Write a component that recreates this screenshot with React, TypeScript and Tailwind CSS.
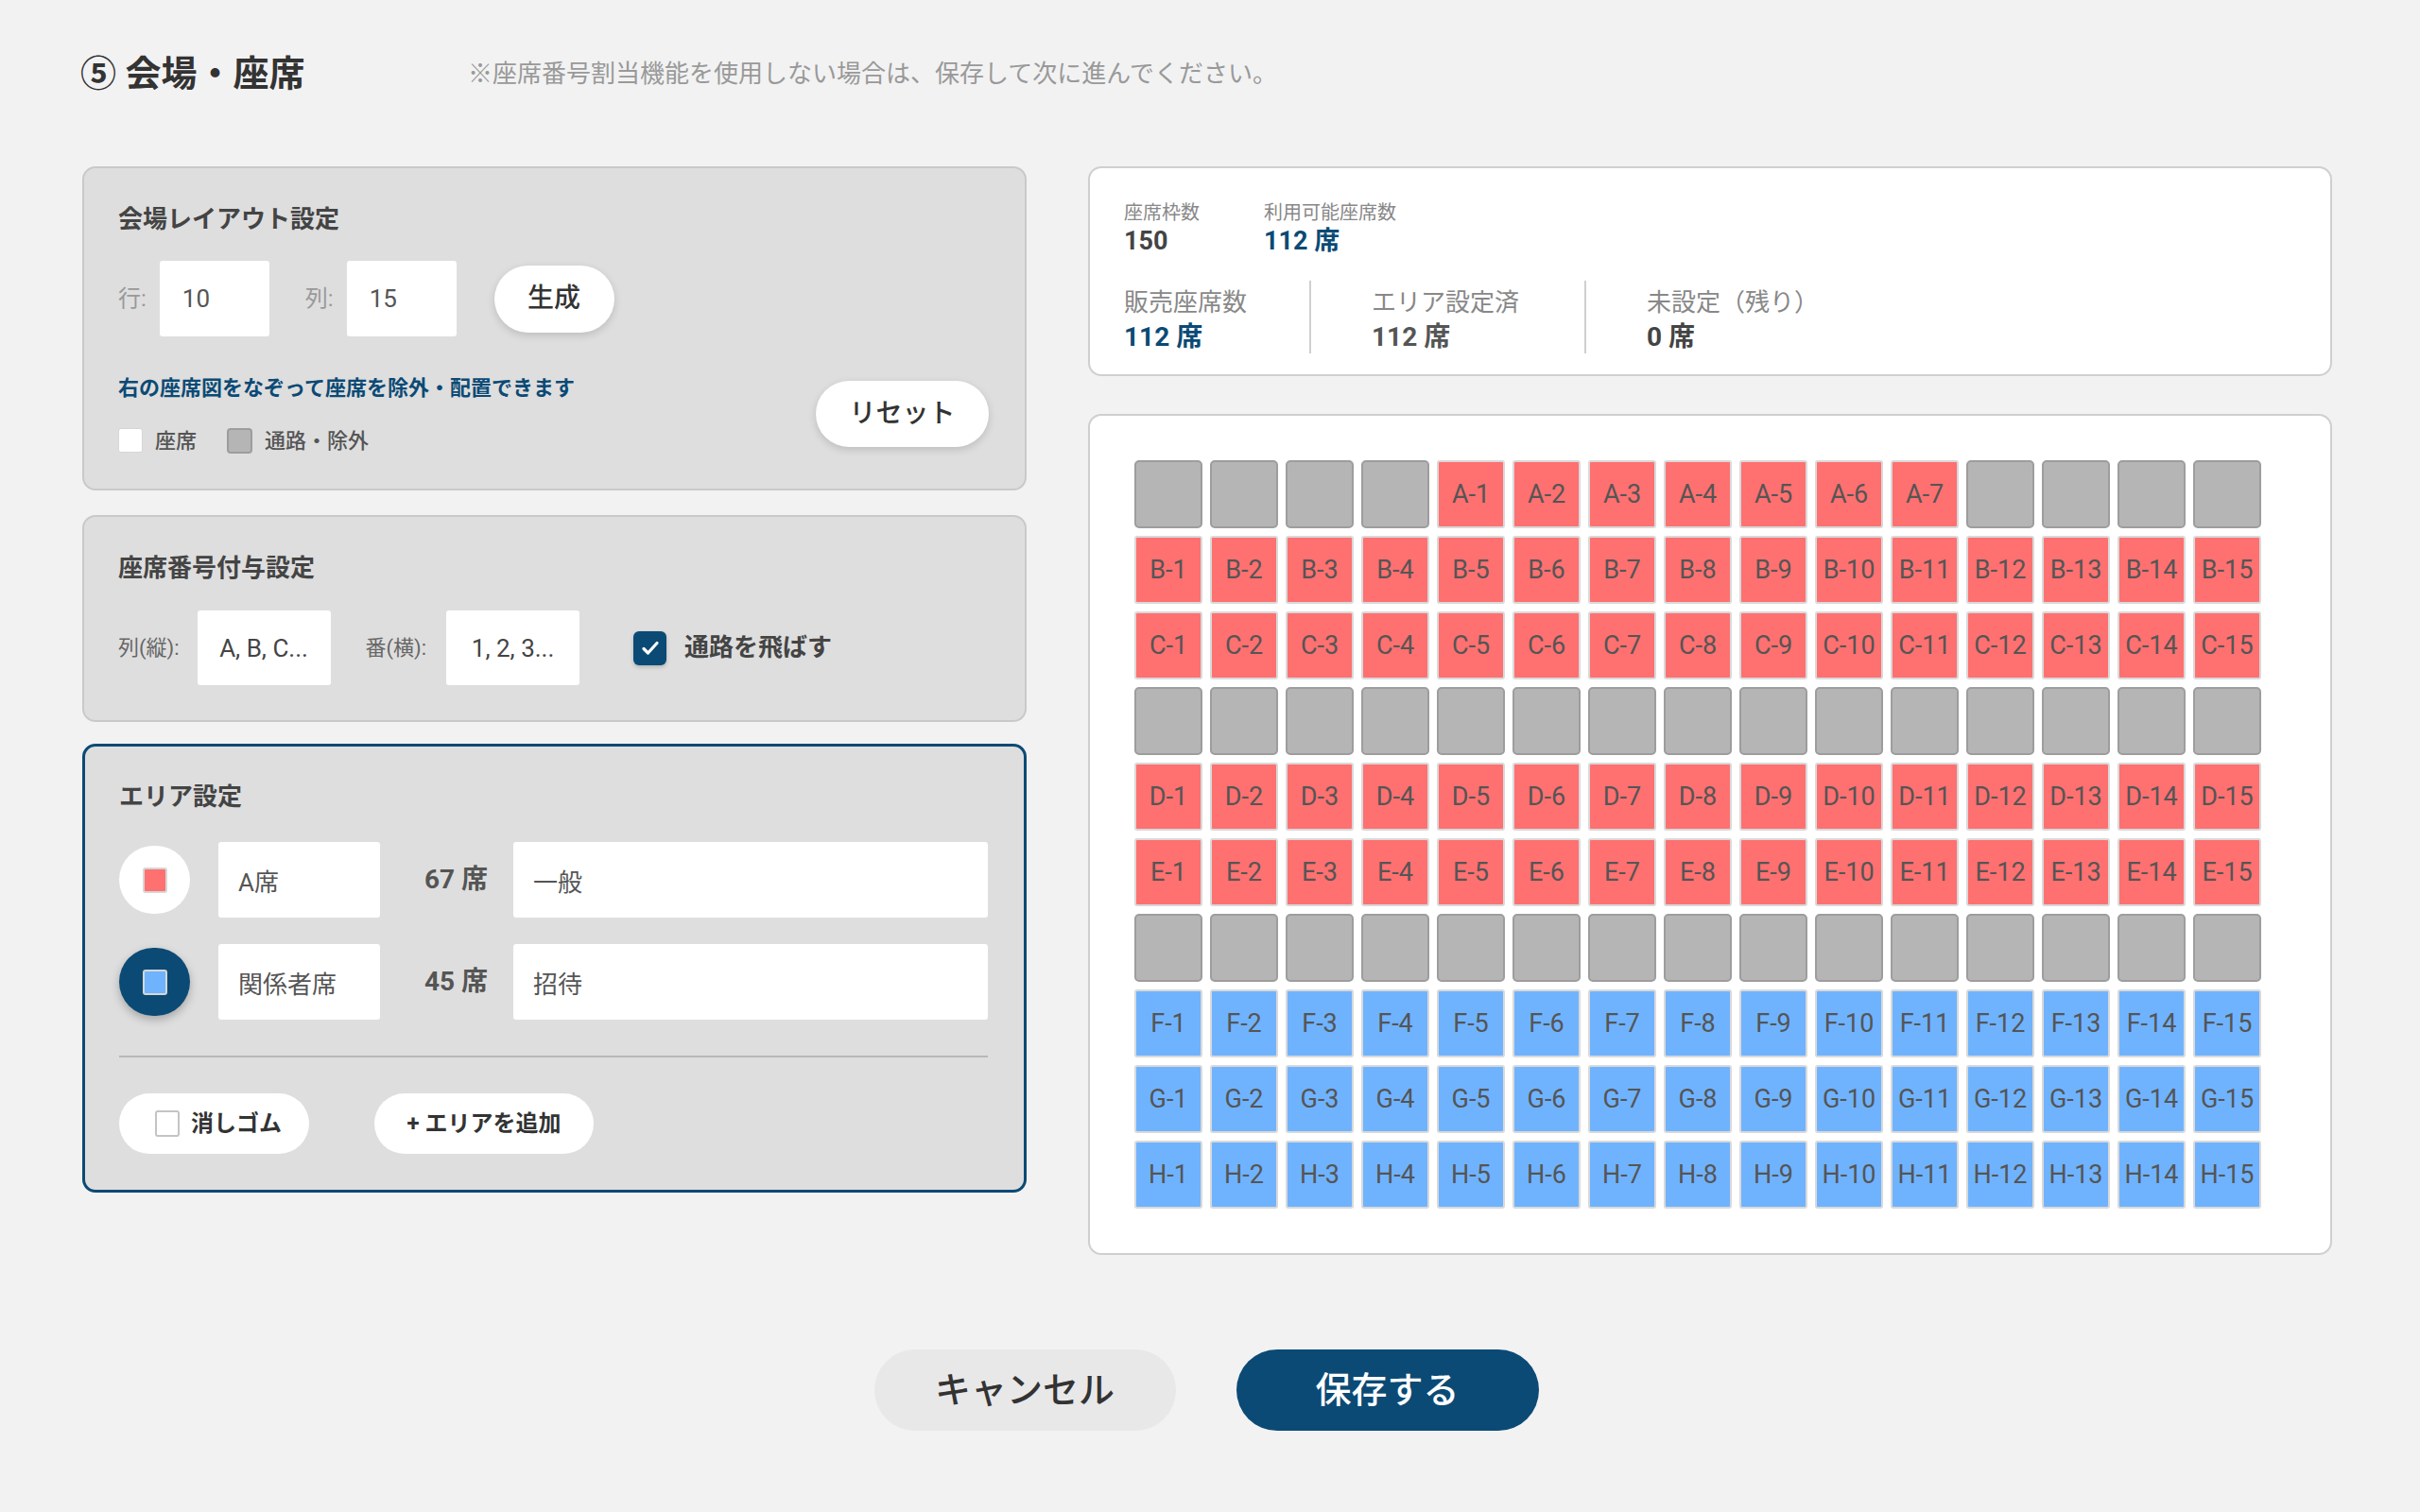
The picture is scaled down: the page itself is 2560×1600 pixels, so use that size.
import clsx from 'clsx';

type Tone = 'red' | 'blue' | 'aisle';
type Seat = { label: string; tone: Tone };

const buildRow = (letter: string | null, tone: Tone, from = 0, to = 14): Seat[] =>
  Array.from({ length: 15 }, (_, i) =>
    letter && i >= from && i <= to
      ? { label: `${letter}-${i - from + 1}`, tone }
      : { label: '', tone: 'aisle' as Tone }
  );

const seatRows: Seat[][] = [
  buildRow('A', 'red', 4, 10),
  buildRow('B', 'red'),
  buildRow('C', 'red'),
  buildRow(null, 'red'),
  buildRow('D', 'red'),
  buildRow('E', 'red'),
  buildRow(null, 'red'),
  buildRow('F', 'blue'),
  buildRow('G', 'blue'),
  buildRow('H', 'blue'),
];

function CheckIcon() {
  return (
    <svg viewBox="0 0 24 24" className="w-[24px] h-[24px]" fill="none" stroke="white" strokeWidth={3.2} strokeLinecap="round" strokeLinejoin="round">
      <path d="M5 12.5l4.5 4.5L19 6.5" />
    </svg>
  );
}

function Panel({ children, className }: { children: React.ReactNode; className?: string }) {
  return (
    <section className={clsx('rounded-[14px] bg-[#dedede] pl-[36px] pr-[38px]', className)}>
      {children}
    </section>
  );
}

function PanelTitle({ children }: { children: React.ReactNode }) {
  return <h2 className="text-[26px] leading-[36px] font-bold text-[#444]">{children}</h2>;
}

function AreaRow({ active, swatch, name, count, note }: { active: boolean; swatch: string; name: string; count: string; note: string }) {
  return (
    <div className="flex items-center h-[80px]">
      <button
        className={clsx(
          'w-[75px] h-[72px] rounded-full flex items-center justify-center',
          active ? 'bg-[#0b4a75] shadow-[0_4px_10px_rgba(0,0,0,0.25)]' : 'bg-white'
        )}
      >
        <span className={clsx('w-[26px] h-[27px] rounded-[3px] border-2 border-[#d6d6d6]', swatch)} />
      </button>
      <input
        type="text"
        defaultValue={name}
        className="ml-[30px] w-[171px] h-[80px] bg-white rounded-[3px] pl-[21px] text-[26px] text-[#555] outline-none"
      />
      <div className="w-[141px] pr-[27px] text-right text-[28px] font-bold text-[#555]">{count}</div>
      <input
        type="text"
        defaultValue={note}
        className="flex-1 h-[80px] bg-white rounded-[3px] pl-[21px] text-[26px] text-[#555] outline-none"
      />
    </div>
  );
}

export default function App() {
  return (
    <div className="min-h-screen w-full bg-[#f2f2f2] pt-[54px] font-['Roboto','Noto_Sans_CJK_JP',sans-serif]">
      <header className="flex items-center h-[48px] pl-[85px]">
        <h1 className="w-[410px] text-[38px] font-bold text-[#333] leading-[48px]">⑤ 会場・座席</h1>
        <p className="text-[26px] text-[#999]">※座席番号割当機能を使用しない場合は、保存して次に進んでください。</p>
      </header>

      <main className="mt-[74px] flex gap-[65px] pl-[87px] pr-[93px]">
        <div className="w-[999px] flex flex-col">
          <Panel className="h-[343px] pt-[36px] border-2 border-[#c9c9c9]">
            <PanelTitle>会場レイアウト設定</PanelTitle>
            <div className="mt-[26px] flex items-center h-[80px]">
              <span className="text-[24px] text-[#999]">行:</span>
              <input type="text" defaultValue="10" className="ml-[14px] w-[116px] h-[80px] bg-white rounded-[3px] pl-[24px] text-[26px] text-[#555] outline-none" />
              <span className="ml-[38px] text-[24px] text-[#999]">列:</span>
              <input type="text" defaultValue="15" className="ml-[14px] w-[116px] h-[80px] bg-white rounded-[3px] pl-[24px] text-[26px] text-[#555] outline-none" />
              <button className="ml-[40px] w-[127px] h-[71px] rounded-full bg-white shadow-[0_3px_8px_rgba(0,0,0,0.15)] text-[28px] font-medium text-[#333]">
                生成
              </button>
            </div>
            <div className="mt-[40px] flex items-center justify-between">
              <div>
                <p className="text-[22px] leading-[30px] font-bold text-[#0b4a75]">右の座席図をなぞって座席を除外・配置できます</p>
                <div className="mt-[27px] flex items-center h-[26px]">
                  <span className="w-[26px] h-[26px] bg-white rounded-[3px] border border-[#d6d6d6]" />
                  <span className="ml-[13px] text-[22px] font-medium text-[#555]">座席</span>
                  <span className="ml-[32px] w-[27px] h-[27px] bg-[#b5b5b5] rounded-[4px] border-2 border-[#9d9d9d]" />
                  <span className="ml-[13px] text-[22px] font-medium text-[#555]">通路・除外</span>
                </div>
              </div>
              <button className="w-[183px] h-[70px] rounded-full bg-white shadow-[0_3px_8px_rgba(0,0,0,0.15)] text-[28px] font-medium text-[#333]">
                リセット
              </button>
            </div>
          </Panel>

          <Panel className="mt-[26px] h-[219px] pt-[36px] border-2 border-[#c9c9c9]">
            <PanelTitle>座席番号付与設定</PanelTitle>
            <div className="mt-[27px] flex items-center h-[79px]">
              <span className="text-[22px] text-[#666]">列(縦):</span>
              <input type="text" defaultValue="A, B, C..." className="ml-[19px] w-[141px] h-[79px] bg-white rounded-[3px] text-center text-[26px] text-[#444] outline-none" />
              <span className="ml-[37px] text-[22px] text-[#666]">番(横):</span>
              <input type="text" defaultValue="1, 2, 3..." className="ml-[21px] w-[141px] h-[79px] bg-white rounded-[3px] text-center text-[26px] text-[#444] outline-none" />
              <span className="ml-[57px] w-[35px] h-[36px] rounded-[6px] bg-[#0b4a75] flex items-center justify-center shadow-[0_2px_4px_rgba(0,0,0,0.2)]">
                <CheckIcon />
              </span>
              <span className="ml-[19px] text-[26px] font-bold text-[#444]">通路を飛ばす</span>
            </div>
          </Panel>

          <Panel className="mt-[23px] h-[475px] pt-[35px] border-[3px] border-[#0b4a75]">
            <PanelTitle>エリア設定</PanelTitle>
            <div className="mt-[30px] flex flex-col gap-[28px]">
              <AreaRow active={false} swatch="bg-[#ff7070]" name="A席" count="67 席" note="一般" />
              <AreaRow active swatch="bg-[#6fb3ff]" name="関係者席" count="45 席" note="招待" />
            </div>
            <div className="mt-[38px] h-[2px] bg-[#b8b8b8]" />
            <div className="mt-[38px] flex items-center gap-[69px]">
              <button className="w-[201px] h-[64px] rounded-full bg-white flex items-center pl-[38px]">
                <span className="w-[26px] h-[28px] rounded-[3px] border-2 border-[#c4c4c4] bg-white" />
                <span className="ml-[12px] text-[24px] font-bold text-[#333]">消しゴム</span>
              </button>
              <button className="w-[232px] h-[64px] rounded-full bg-white text-[24px] font-bold text-[#333]">
                + エリアを追加
              </button>
            </div>
          </Panel>
        </div>

        <div className="flex-1 flex flex-col">
          <section className="h-[222px] rounded-[14px] bg-white border-2 border-[#cfcfcf] pl-[36px] pt-[35px]">
            <div className="flex gap-[68px]">
              <div>
                <div className="text-[20px] leading-[24px] text-[#888]">座席枠数</div>
                <div className="mt-[2px] text-[27px] leading-[32px] font-bold text-[#444]">150</div>
              </div>
              <div>
                <div className="text-[20px] leading-[24px] text-[#888]">利用可能座席数</div>
                <div className="mt-[2px] text-[27px] leading-[32px] font-bold text-[#0b4a75]">112 席</div>
              </div>
            </div>
            <div className="mt-[26px] flex">
              <div className="h-[77px] pt-[7px] pr-[66px] border-r-2 border-[#cfcfcf]">
                <div className="text-[26px] leading-[32px] text-[#888]">販売座席数</div>
                <div className="mt-[5px] text-[28px] leading-[32px] font-bold text-[#0b4a75]">112 席</div>
              </div>
              <div className="h-[77px] pt-[7px] pl-[64px] pr-[69px] border-r-2 border-[#cfcfcf]">
                <div className="text-[26px] leading-[32px] text-[#888]">エリア設定済</div>
                <div className="mt-[5px] text-[28px] leading-[32px] font-bold text-[#555]">112 席</div>
              </div>
              <div className="h-[77px] pt-[7px] pl-[64px]">
                <div className="text-[26px] leading-[32px] text-[#888]">未設定（残り）</div>
                <div className="mt-[5px] text-[28px] leading-[32px] font-bold text-[#444]">0 席</div>
              </div>
            </div>
          </section>

          <section className="mt-[40px] h-[890px] rounded-[14px] bg-white border-2 border-[#cfcfcf] pl-[47px] pt-[47px]">
            <div className="grid grid-cols-[repeat(15,72px)] auto-rows-[72px] gap-[8px]">
              {seatRows.flatMap((row, r) =>
                row.map((seat, c) => (
                  <div
                    key={`${r}-${c}`}
                    className={clsx(
                      'flex items-center justify-center text-[27px] text-[#555] border-2',
                      seat.tone === 'red' && 'bg-[#ff7070] border-[#d9d9d9] rounded-[3px]',
                      seat.tone === 'blue' && 'bg-[#6fb3ff] border-[#d9d9d9] rounded-[3px]',
                      seat.tone === 'aisle' && 'bg-[#b5b5b5] border-[#9d9d9d] rounded-[5px]'
                    )}
                  >
                    {seat.label}
                  </div>
                ))
              )}
            </div>
          </section>
        </div>
      </main>

      <footer className="mt-[100px] flex justify-center gap-[64px] pr-[8px] pb-[86px]">
        <button className="w-[319px] h-[86px] rounded-full bg-[#e8e8e8] text-[38px] font-medium text-[#333]">キャンセル</button>
        <button className="w-[320px] h-[86px] rounded-full bg-[#0b4a75] text-[38px] font-medium text-white">保存する</button>
      </footer>
    </div>
  );
}
